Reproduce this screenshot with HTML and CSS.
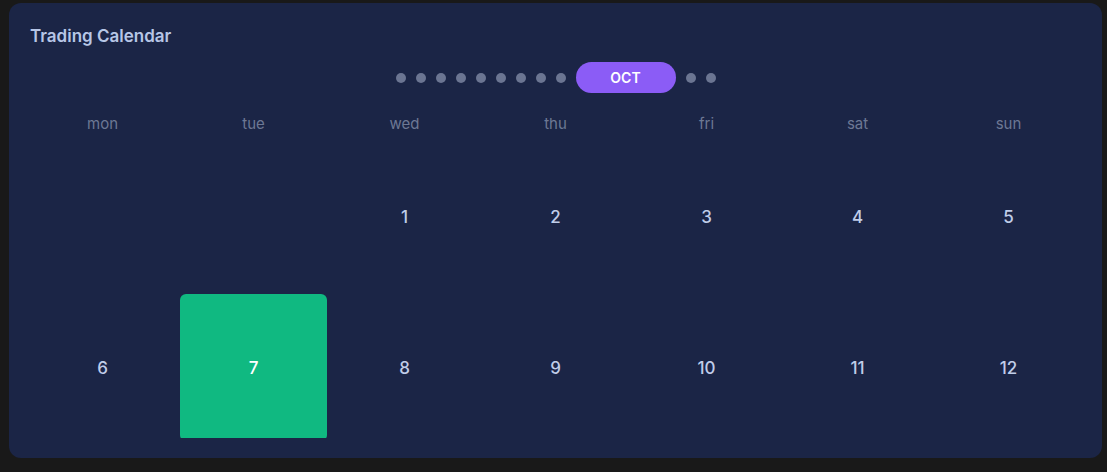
FILE: index.html
```html
<!DOCTYPE html>
<html>
<head>
<meta charset="utf-8">
<link rel="stylesheet" href="styles.css">
</head>
<body>
<div class="card">
  <div class="title">Trading Calendar</div>
  <div class="months">
    <span class="dot"></span><span class="dot"></span><span class="dot"></span>
    <span class="dot"></span><span class="dot"></span><span class="dot"></span>
    <span class="dot"></span><span class="dot"></span><span class="dot"></span>
    <span class="pill">OCT</span>
    <span class="dot"></span><span class="dot"></span>
  </div>
  <div class="weekdays">
    <div>mon</div><div>tue</div><div>wed</div><div>thu</div><div>fri</div><div>sat</div><div>sun</div>
  </div>
  <div class="grid-wrap">
    <div class="grid">
      <div class="cell"></div>
      <div class="cell"></div>
      <div class="cell">1</div>
      <div class="cell">2</div>
      <div class="cell">3</div>
      <div class="cell">4</div>
      <div class="cell">5</div>
      <div class="cell">6</div>
      <div class="cell win">7</div>
      <div class="cell">8</div>
      <div class="cell">9</div>
      <div class="cell">10</div>
      <div class="cell">11</div>
      <div class="cell">12</div>
    </div>
  </div>
</div>
</body>
</html>
```

FILE: styles.css
```css
html, body {
  margin: 0;
  background: #191919;
}
body {
  padding: 3px 5px 14px 9px;
  font-family: Inter, "Noto Sans", sans-serif;
}
.card {
  box-sizing: border-box;
  width: 1093px;
  height: 455px;
  background: #1b2546;
  border-radius: 12px;
  padding: 22px 20px 20px 20px;
  display: flex;
  flex-direction: column;
}
.title {
  color: #b7c6e6;
  font-size: 17px;
  font-weight: 600;
  line-height: 22px;
  padding-left: 1px;
}
.months {
  margin-top: 15px;
  height: 31px;
  display: flex;
  align-items: center;
  justify-content: center;
  gap: 10px;
}
.dot {
  width: 10px;
  height: 10px;
  border-radius: 50%;
  background: #6b7592;
}
.pill {
  width: 100px;
  height: 31px;
  border-radius: 16px;
  background: #8b5cf6;
  color: #fff;
  font-size: 14px;
  font-weight: 600;
  display: flex;
  align-items: center;
  justify-content: center;
}
.weekdays {
  margin-top: 21px;
  display: grid;
  grid-template-columns: repeat(7, 1fr);
  gap: 4px;
  color: #6d7894;
  font-size: 15px;
  line-height: 20px;
  text-align: center;
}
.grid-wrap {
  margin-top: 9px;
  flex: 1;
  overflow: hidden;
  border-radius: 0 0 3px 3px;
}
.grid {
  display: grid;
  grid-template-columns: repeat(7, 1fr);
  gap: 4px;
}
.cell {
  aspect-ratio: 1 / 1;
  display: flex;
  align-items: center;
  justify-content: center;
  color: #c0cde9;
  font-size: 17px;
  font-weight: 500;
  border-radius: 6px;
}
.cell.win {
  background: #10b981;
  color: #fff;
}
```
